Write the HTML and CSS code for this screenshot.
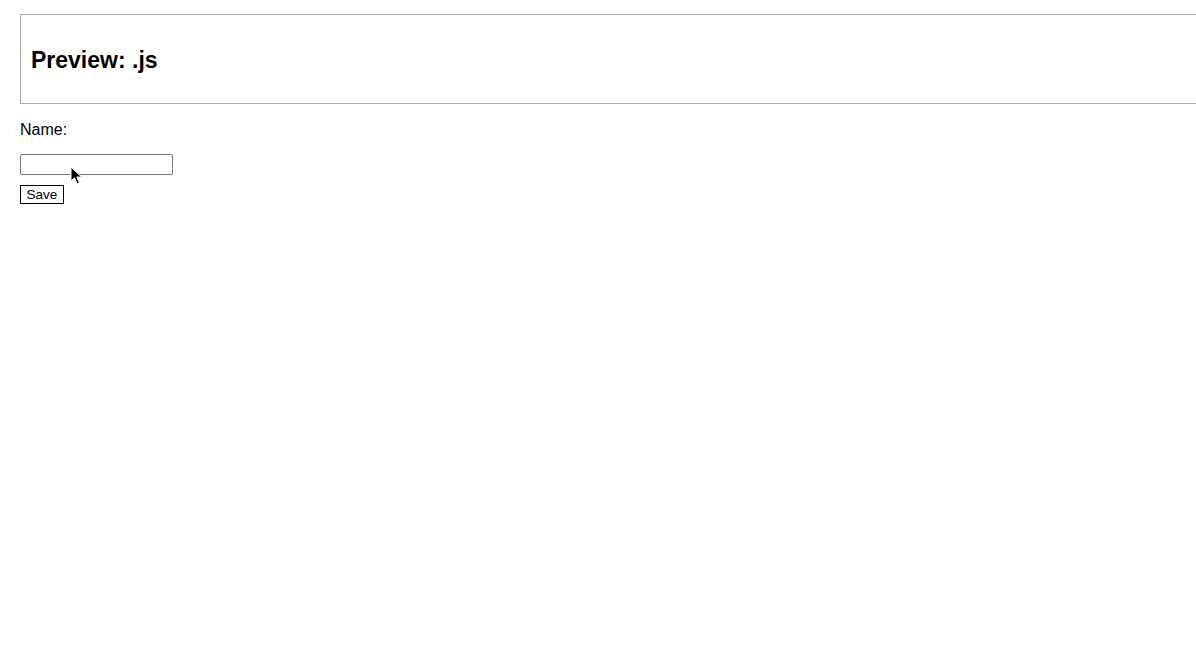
FILE: index.html
```html
<!DOCTYPE html>
<html>
<head>
<meta charset="utf-8">
<link rel="stylesheet" href="styles.css">
</head>
<body>
<div class="preview">
  <h1 class="title">Preview: .js</h1>
</div>
<form class="form">
  <label class="label" for="name">Name:</label>
  <input class="input" id="name" type="text">
  <button class="save" type="button">Save</button>
</form>
<svg class="cursor" width="14" height="20" viewBox="0 0 14 20">
  <path d="M1 1 L1 15 L4.5 11.8 L7.2 18 L9.4 17 L6.8 11 L11.5 11 Z" fill="#000" stroke="#fff" stroke-width="1"/>
</svg>
</body>
</html>
```
FILE: styles.css
```css
html { overflow: hidden; }
body {
  margin: 14px 0 0 20px;
  font-family: "Liberation Sans", Arial, sans-serif;
  background: #fff;
  color: #000;
  position: relative;
}
.preview {
  width: 1200px;
  height: 88px;
  border: 1px solid #aaa;
  display: flex;
  align-items: center;
  padding: 0 10px;
}
.title {
  margin: 2px 0 0 0;
  font-size: 23px;
  font-weight: bold;
}
.form {
  display: flex;
  flex-direction: column;
  align-items: flex-start;
}
.label {
  font-size: 16px;
  margin-top: 17px;
  line-height: 18px;
}
.input {
  margin: 15px 0 0 0;
  width: 153px;
  height: 21px;
  box-sizing: border-box;
  border: 1px solid #777;
  border-radius: 2px;
  padding: 0;
}
.save {
  margin-top: 10px;
  width: 44px;
  height: 19px;
  box-sizing: border-box;
  border: 1px solid #000;
  background: #fff;
  font-family: "Liberation Sans", Arial, sans-serif;
  font-size: 13.5px;
  padding: 0;
  border-radius: 0;
  color: #000;
}
.cursor {
  position: absolute;
  left: 50px;
  top: 152px;
}
```
